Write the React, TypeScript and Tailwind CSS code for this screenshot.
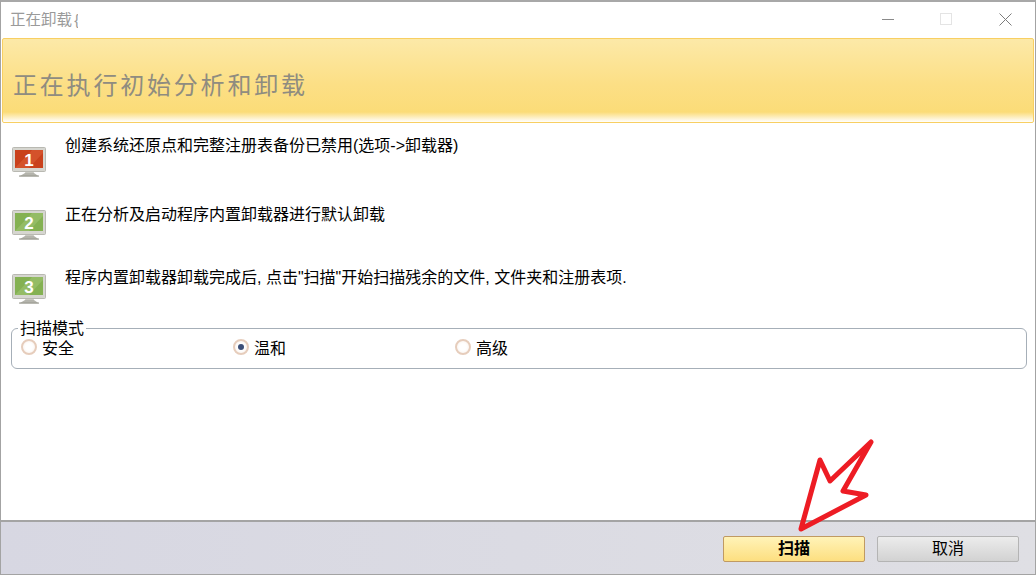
import React from "react";

const cjk = "font-['Tahoma','Liberation_Sans','Noto_Sans_CJK_SC',sans-serif]";

function Monitor({ num, color, light }: { num: string; color: string; light: string }) {
  return (
    <svg width="35" height="30" viewBox="0 0 35 30" className="shrink-0">
      <path d="M14 23h7l1 3h-9z" fill="#c8c8c0" />
      <path d="M13 26h9l5 3.5H7z" fill="#b4b4ac" />
      <path d="M7 28.5h20v1H7z" fill="#98988f" />
      <rect x="0.5" y="0.5" width="33" height="24" rx="1" fill="#d6d6d0" stroke="#b9b9b2" />
      <rect x="3" y="3" width="28" height="18" fill={color} />
      <path d="M3 21 L20 3 H31 V6 L17 21z" fill={light} opacity="0.5" />
      <text x="17" y="18.5" textAnchor="middle" fontSize="17" fontWeight="700" fill="#fff" fontFamily="Liberation Sans, sans-serif">
        {num}
      </text>
    </svg>
  );
}

function Step({ num, color, light, text, top, textTop }: { num: string; color: string; light: string; text: string; top: string; textTop: string }) {
  return (
    <div className={`flex h-[30px] pl-[11px] ${top}`}>
      <Monitor num={num} color={color} light={light} />
      <p className={`ml-[18px] text-[16px] leading-[24px] text-black whitespace-nowrap ${textTop}`}>{text}</p>
    </div>
  );
}

function Radio({ label, checked, width }: { label: string; checked?: boolean; width: string }) {
  return (
    <div className={`flex items-start ${width}`}>
      <span className="flex h-4 w-4 items-center justify-center rounded-full border-2 border-[#e6cdbc] bg-[radial-gradient(circle,#ffffff_40%,#f8efe8_100%)]">
        {checked && <span className="h-[6px] w-[6px] rounded-full bg-[#3c4f78]" />}
      </span>
      <span className="ml-[5px] mt-[2px] text-[16px] leading-none text-black">{label}</span>
    </div>
  );
}

export default function App() {
  return (
    <div className={`relative flex h-[575px] w-[1036px] flex-col overflow-hidden border-x border-t-2 border-b border-x-[#a3a3a3] border-t-[#a8a8a8] border-b-[#a3a3a3] bg-white ${cjk}`}>
      <div className="flex h-[36px] shrink-0 items-center justify-between">
        <div className="ml-[9px] w-[68px] overflow-hidden whitespace-nowrap text-[15.5px] leading-none text-[#9a9a9a]">
          正在卸载 <span className="-ml-[2px]">{"{"}</span>
        </div>
        <div className="flex items-center pb-[2px]">
          <span className="mr-[46px] h-px w-3 bg-[#8a8a8a]" />
          <span className="mr-[47px] h-3 w-3 border border-[#e4e4e4]" />
          <svg width="13" height="13" viewBox="0 0 13 13" className="mr-[23px]">
            <path d="M0.5 0.5l12 12M12.5 0.5l-12 12" stroke="#7c7c7c" strokeWidth="1" fill="none" />
          </svg>
        </div>
      </div>

      <div className="mx-px flex h-[85px] shrink-0 items-center rounded-[2px] border border-[#f8cf62] bg-[linear-gradient(180deg,#fce9a8_0%,#fcdf85_55%,#fbdc78_88%,#ffffff_100%)] pl-[10px] pt-[10px]">
        <h1 className="text-[24px] font-normal leading-none tracking-[2.8px] text-[#8f8c80]">正在执行初始分析和卸载</h1>
      </div>

      <div className="flex-1">
        <Step top="mt-[24px]" textTop="-mt-[13px]" num="1" color="#c9411c" light="#e0643a" text="创建系统还原点和完整注册表备份已禁用(选项->卸载器)" />
        <Step top="mt-[33px]" textTop="-mt-[7px]" num="2" color="#84b152" light="#a3c878" text="正在分析及启动程序内置卸载器进行默认卸载" />
        <Step top="mt-[34px]" textTop="-mt-[8px]" num="3" color="#84b152" light="#a3c878" text="程序内置卸载器卸载完成后, 点击&quot;扫描&quot;开始扫描残余的文件, 文件夹和注册表项." />

        <div className="relative ml-[10px] mr-2 mt-[24px] flex h-[41px] items-start rounded-[6px] border border-[#a6afb8] pl-[9px] pt-[10px]">
          <span className="absolute -top-[9px] left-[6px] bg-white px-[2px] text-[16px] leading-[17px] text-black">扫描模式</span>
          <Radio label="安全" width="w-[212px]" />
          <Radio label="温和" checked width="w-[222px]" />
          <Radio label="高级" width="w-[100px]" />
        </div>
      </div>

      <div className="flex h-[54px] shrink-0 items-center justify-end gap-3 border-t-2 border-[#a4a4a4] bg-[linear-gradient(90deg,#d7d7e2_0%,#dfdfe4_100%)] pr-[15px] pt-[1px]">
        <button className="h-[26px] w-[142px] rounded-[2px] border border-[#c09a62] bg-[linear-gradient(180deg,#fff3b8_0%,#fddf80_100%)] text-[16px] font-bold leading-none text-black">
          扫描
        </button>
        <button className="mr-px h-[26px] w-[142px] rounded-[2px] border border-[#b4b4b4] bg-[linear-gradient(180deg,#ececec_0%,#d2d2d2_100%)] text-[16px] leading-none text-black">
          取消
        </button>
      </div>

      <svg width="1036" height="575" viewBox="0 0 1036 575" className="pointer-events-none absolute -left-px -top-[2px]">
        <path d="M801 529 L820 460 L830 481 L871 442 L843 491 L866 495 Z" fill="none" stroke="#ed1c24" strokeWidth="5" strokeLinejoin="round" strokeLinecap="round" />
      </svg>
    </div>
  );
}
